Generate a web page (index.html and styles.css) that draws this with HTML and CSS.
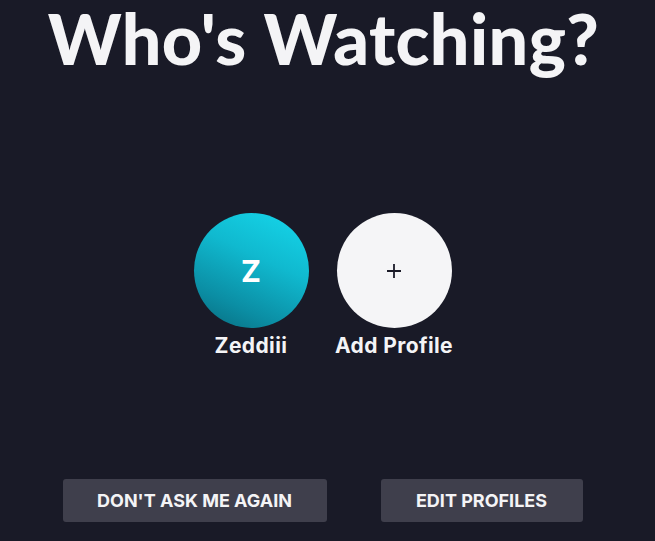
FILE: index.html
```html
<!DOCTYPE html>
<html lang="en">
<head>
<meta charset="utf-8">
<title>Who's Watching?</title>
<link rel="stylesheet" href="styles.css">
</head>
<body>
<main class="screen">
  <h1 class="title">Who's Watching?</h1>
  <section class="profiles">
    <a class="profile" href="#">
      <span class="avatar avatar-user">Z</span>
      <span class="name">Zeddiii</span>
    </a>
    <a class="profile" href="#">
      <span class="avatar avatar-add">
        <svg class="plus" viewBox="0 0 16 16" width="16" height="16" aria-hidden="true">
          <path d="M8 1v14M1 8h14" stroke="#1b1b28" stroke-width="1.8" fill="none"/>
        </svg>
      </span>
      <span class="name">Add Profile</span>
    </a>
  </section>
  <footer class="actions">
    <button class="btn btn-wide" type="button">DON'T ASK ME AGAIN</button>
    <button class="btn btn-narrow" type="button">EDIT PROFILES</button>
  </footer>
</main>
</body>
</html>
```
FILE: styles.css
```css
html, body {
  margin: 0;
  padding: 0;
  background: #191a27;
  height: 100%;
}

.screen {
  font-family: "Inter", "Lato", sans-serif;
  color: #f4f4f6;
  display: flex;
  flex-direction: column;
  align-items: center;
  height: 541px;
  box-sizing: border-box;
}

.title {
  margin: 0;
  font-family: "Lato", "Inter", sans-serif;
  font-size: 70px;
  line-height: 84px;
  margin-top: -4px;
  font-weight: 900;
  letter-spacing: 0.4px;
  transform: translateX(-4px);
}

.profiles {
  display: flex;
  gap: 28px;
  margin-top: 133px;
  transform: translateX(-5px);
}

.profile {
  display: flex;
  flex-direction: column;
  align-items: center;
  text-decoration: none;
  color: #f4f4f6;
  width: 115px;
}

.avatar {
  width: 115px;
  height: 115px;
  border-radius: 50%;
  display: flex;
  align-items: center;
  justify-content: center;
}

.avatar-user {
  background: linear-gradient(205deg, #16d8ec 0%, #10b9cf 40%, #0b8ea4 75%, #086a7c 100%);
  color: #ffffff;
  font-size: 30px;
  font-weight: 700;
}

.avatar-add {
  background: #f5f5f7;
}

.plus {
  display: block;
}

.name {
  margin-top: 5px;
  font-size: 21px;
  font-weight: 700;
  line-height: 26px;
  letter-spacing: 0.4px;
  white-space: nowrap;
}

.actions {
  display: flex;
  gap: 54px;
  margin-top: auto;
  margin-bottom: 19px;
  transform: translateX(-5px);
}

.btn {
  height: 43px;
  border: 0;
  border-radius: 3px;
  background: #3f3f4c;
  color: #f4f4f6;
  font-family: "Inter", "Lato", sans-serif;
  font-size: 18px;
  font-weight: 700;
  letter-spacing: 0;
  cursor: pointer;
}

.btn-wide {
  width: 264px;
}

.btn-narrow {
  width: 202px;
}
```
